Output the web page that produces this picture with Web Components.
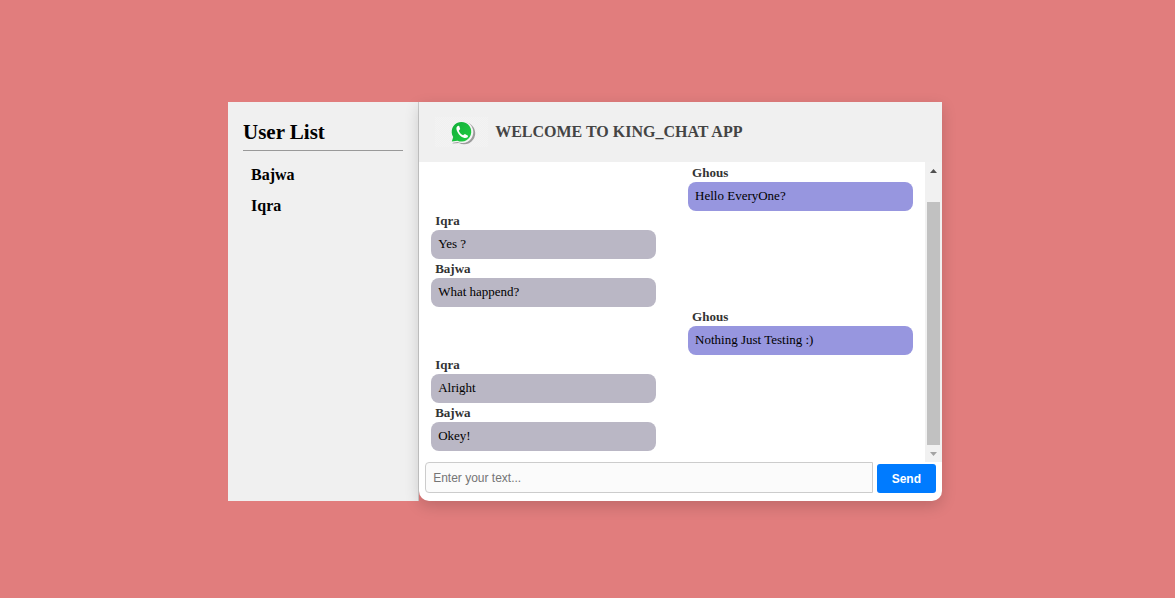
<!DOCTYPE html>
<html lang="en">
<head>
<meta charset="utf-8">
<meta name="viewport" content="width=device-width, initial-scale=1">
<title>King Chat</title>
<style>
html{height:100%}
body{margin:0;min-height:100%;display:grid;background:#e17d7d;font-family:"Liberation Serif",serif;color:#000}
</style>
</head>
<body>
<chat-app>
  <user-list slot="side" heading="User List">
    <user-entry>Bajwa</user-entry>
    <user-entry>Iqra</user-entry>
  </user-list>
  <chat-header slot="header">WELCOME TO KING_CHAT APP</chat-header>
  <message-list slot="messages">
    <chat-message author="Ghous" own>Hello EveryOne?</chat-message>
    <chat-message author="Iqra">Yes ?</chat-message>
    <chat-message author="Bajwa">What happend?</chat-message>
    <chat-message author="Ghous" own>Nothing Just Testing :)</chat-message>
    <chat-message author="Iqra">Alright</chat-message>
    <chat-message author="Bajwa">Okey!</chat-message>
  </message-list>
  <message-form slot="form"></message-form>
</chat-app>
<script>
const define = (name, html, setup) => {
  const template = document.createElement('template');
  template.innerHTML = html;
  customElements.define(name, class extends HTMLElement {
    constructor() {
      super();
      this.attachShadow({ mode: 'open' }).append(template.content.cloneNode(true));
    }
    connectedCallback() {
      if (setup) setup(this, this.shadowRoot);
    }
  });
};

define('chat-app', `
<style>
:host{display:grid;place-items:center;box-sizing:border-box;padding:5px 5px 0 0}
.app{display:flex;width:100%;max-width:714px}
.side{flex:4 1 0;min-width:0;background:#f0f0f0;border-right:1px solid #ccc;display:grid}
.chat{flex:11 1 0;min-width:0;position:relative;background:#fff;border-radius:0 0 10px 10px;box-shadow:0 5px 15px rgba(0,0,0,.16)}
</style>
<div class="app">
  <aside class="side"><slot name="side"></slot></aside>
  <main class="chat">
    <slot name="header"></slot>
    <slot name="messages"></slot>
    <slot name="form"></slot>
  </main>
</div>`);

define('user-list', `
<style>
:host{display:block;padding:16px 15px}
h2{margin:0 0 8px;padding-bottom:4px;font-size:21px;line-height:28px;border-bottom:1px solid #999}
</style>
<h2></h2>
<div role="list"><slot></slot></div>`,
(el, root) => { root.querySelector('h2').textContent = el.getAttribute('heading'); });

define('user-entry', `
<style>
:host{display:block;padding:0 8px;font-size:16px;font-weight:bold;line-height:31px}
</style>
<div role="listitem"><slot></slot></div>`);

define('chat-header', `
<style>
:host{display:flex;align-items:center;height:60px;padding:0 16px;gap:7px;background:#f0f0f0}
svg{flex:none;display:block}
h1{margin:0;font-size:16px;line-height:24px;color:#444}
</style>
<svg width="53" height="30" viewBox="0 0 53 30" aria-hidden="true">
  <defs>
    <linearGradient id="g" x1="0" y1="0" x2="1" y2="1"><stop offset="0" stop-color="#10ae38"/><stop offset="1" stop-color="#22cd42"/></linearGradient>
    <pattern id="p" width="2" height="2" patternUnits="userSpaceOnUse"><path d="M0 0h1v1h-1zM1 1h1v1h-1z" fill="#fff" opacity=".22"/></pattern>
  </defs>
  <rect width="53" height="30" fill="url(#p)"/>
  <path d="M17.500 26.500l2-5A11 11 0 1 1 24 26z" fill="#777" opacity=".7"/>
  <path d="M16.500 26l1.500-5A11 11 0 1 1 22.500 25z" fill="#f4f4f4"/>
  <path d="M16.800 24.500l1.400-4.500A9.800 9.800 0 1 1 22.500 23.700z" fill="url(#g)"/>
  <path d="M23.200 8.700c-1.800.6-2.200 2.700-1.400 4.800 1.300 3.600 4.200 6.700 7.700 7.500 1.900.4 3.700-.7 3.500-2.200l-3.100-1.900-1.800 1.400c-2-.9-3.500-2.500-4.300-4.600l1.400-1.700-1-3.100z" fill="#fff"/>
</svg>
<h1><slot></slot></h1>`);

define('message-list', `
<style>
:host{display:flex}
.log{flex:1;min-width:0;padding:1px 12px 11px}
.bar{flex:none;width:17px;display:flex;flex-direction:column;background:#f1f1f1}
.arrow{flex:none;height:17px;display:grid;place-items:center}
.track{flex:1;display:flex;flex-direction:column;padding:23px 2px 0}
.thumb{flex:1;background:#c1c1c1}
svg{display:block}
</style>
<div class="log" role="log"><slot></slot></div>
<div class="bar" aria-hidden="true">
  <div class="arrow"><svg width="7" height="4" viewBox="0 0 7 4"><path d="M0 4L3.500 0 7 4z" fill="#505050"/></svg></div>
  <div class="track"><div class="thumb"></div></div>
  <div class="arrow"><svg width="7" height="4" viewBox="0 0 7 4"><path d="M0 0l3.500 4L7 0z" fill="#a3a3a3"/></svg></div>
</div>`);

define('chat-message', `
<style>
:host{display:grid;grid-template-columns:1fr 1fr;column-gap:32px}
:host([own]) article{grid-column:2}
.name{padding:0 4px;font-size:13px;line-height:19px;font-weight:bold;color:#333}
.text{margin:0;padding:4px 7px 6px;font-size:13px;line-height:19px;border-radius:8px;background:#bab7c5}
:host([own]) .text{background:#9796df}
</style>
<article>
  <div class="name"></div>
  <p class="text"><slot></slot></p>
</article>`,
(el, root) => { root.querySelector('.name').textContent = el.getAttribute('author'); });

define('message-form', `
<style>
:host{display:block;padding:0 6px 8px}
form{display:flex;align-items:flex-end;gap:4px}
input{flex:1;min-width:0;box-sizing:border-box;height:31px;margin:0;padding:0 7px;border:1px solid #ccc;border-radius:4px 0 0 4px;background:#fbfbfb;font:12px "Liberation Sans",sans-serif;outline:0}
input::placeholder{color:#757575}
button{height:29px;margin:0;padding:0 15px;border:0;border-radius:3px;background:#007bff;color:#fff;font:bold 12px "Liberation Sans",sans-serif;cursor:pointer}
</style>
<form>
  <input type="text" aria-label="Message" placeholder="Enter your text...">
  <button type="submit">Send</button>
</form>`,
(el, root) => { root.querySelector('form').addEventListener('submit', e => e.preventDefault()); });
</script>
</body>
</html>
